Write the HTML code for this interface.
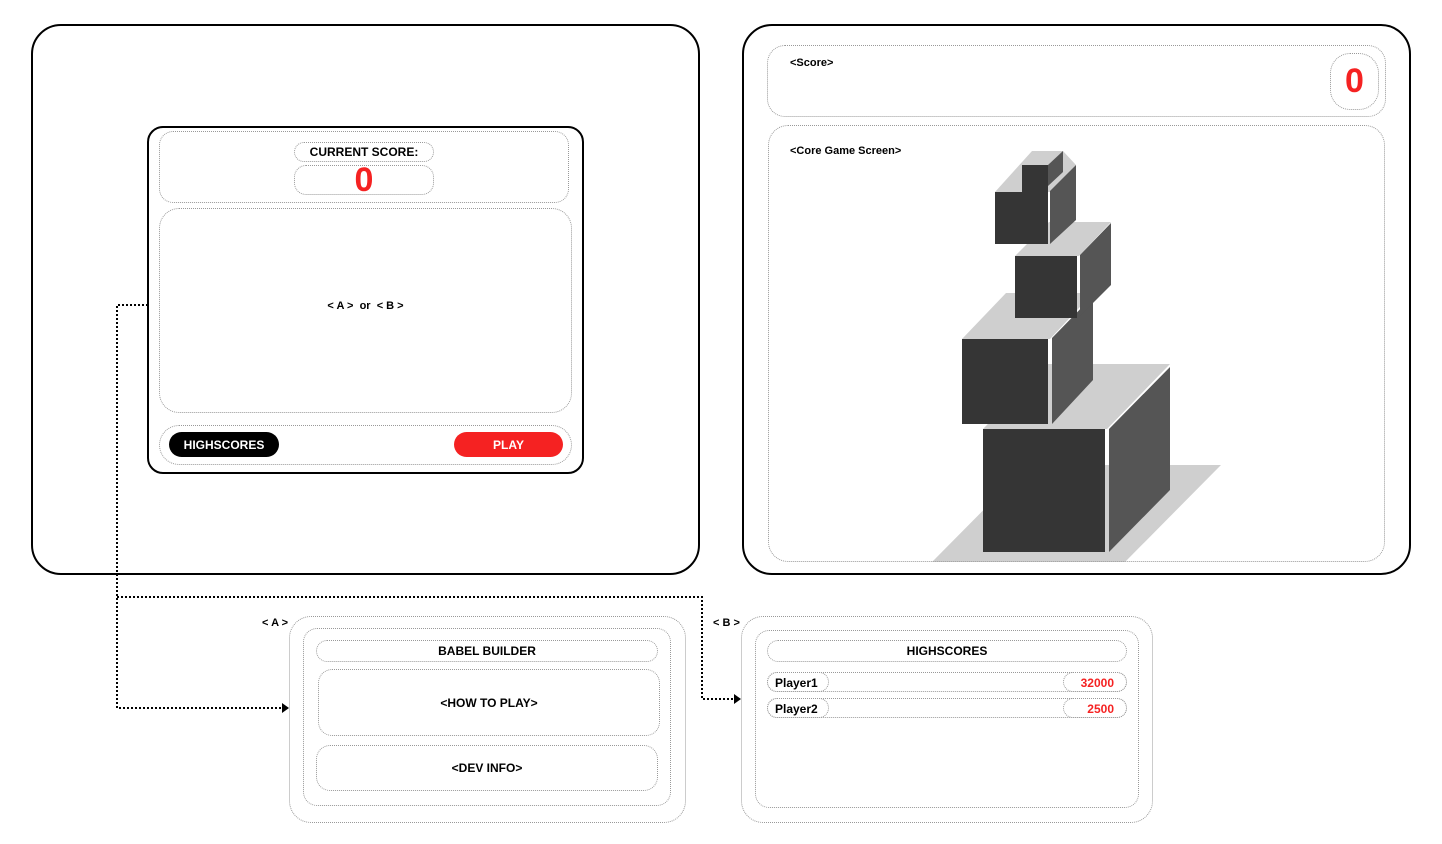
<!DOCTYPE html>
<html><head><style>
body{margin:0;width:1442px;height:844px;background:#fff;position:relative;overflow:hidden;font-family:"Liberation Sans",Arial,sans-serif;font-weight:bold;color:#000}
.a{position:absolute;box-sizing:border-box}
.d{border:1px dotted #999}
.c{display:flex;align-items:center;justify-content:center}
</style></head><body>
<svg class="a" style="left:0;top:0" width="1442" height="844">
<g fill="none" stroke="#000" stroke-width="2" stroke-dasharray="2,2">
<path d="M148 305H117V708H282"/>
<path d="M117 597H702V699H734"/>
</g>
<path d="M282 703L289 708L282 713Z M734 694L741 699L734 704Z"/>
<polygon points="932,562 1125,562 1221,465 1028,465" fill="#cfcfcf"/>
<polygon points="983,429 1107,429 1170,364 1046,364" fill="#cfcfcf"/>
<polygon points="1109,429 1170,367 1170,490 1109,552" fill="#555"/>
<rect x="983" y="429" width="122" height="123" fill="#353535"/>
<polygon points="962,339 1050,339 1093,293 1006,293" fill="#cfcfcf"/>
<polygon points="1052,338 1093,296 1093,380 1052,424" fill="#555"/>
<rect x="962" y="339" width="86" height="85" fill="#353535"/>
<polygon points="1015,256 1079,256 1111,222 1049,222" fill="#cfcfcf"/>
<polygon points="1080,255 1111,223 1111,285 1080,316" fill="#555"/>
<rect x="1015" y="256" width="62" height="62" fill="#353535"/>
<polygon points="995,192 1050,192 1076,165 1063,151 1032,151" fill="#cfcfcf"/>
<polygon points="1050,191 1076,165 1076,220 1050,244" fill="#555"/>
<polygon points="1048,165 1063,151 1063,172 1048,186" fill="#555"/>
<rect x="995" y="192" width="53" height="52" fill="#353535"/>
<rect x="1022" y="165" width="26" height="28" fill="#353535"/>
</svg>
<div class="a" style="left:31px;top:24px;width:669px;height:551px;border:2px solid #000;border-radius:30px"></div>
<div class="a" style="left:742px;top:24px;width:669px;height:551px;border:2px solid #000;border-radius:30px"></div>
<div class="a" style="left:147px;top:126px;width:437px;height:348px;border:2px solid #000;border-radius:16px"></div>
<div class="a d" style="left:159px;top:131px;width:410px;height:72px;border-radius:14px"></div>
<div class="a d c" style="left:294px;top:142px;width:140px;height:20px;border-radius:10px;font-size:12px">CURRENT SCORE:</div>
<div class="a d c" style="left:294px;top:165px;width:140px;height:30px;border-radius:12px;font-size:34px;color:#f52222">0</div>
<div class="a d c" style="left:159px;top:208px;width:413px;height:205px;border-radius:20px;font-size:11px;padding-bottom:10px">&lt; A &gt;&nbsp; or &nbsp;&lt; B &gt;</div>
<div class="a d" style="left:159px;top:425px;width:413px;height:40px;border-radius:20px"></div>
<div class="a c" style="left:169px;top:432px;width:110px;height:25px;border-radius:13px;background:#000;color:#fff;font-size:12px">HIGHSCORES</div>
<div class="a c" style="left:454px;top:432px;width:109px;height:25px;border-radius:13px;background:#f52222;color:#fff;font-size:12px">PLAY</div>
<div class="a d" style="left:767px;top:45px;width:619px;height:72px;border-radius:18px"></div>
<div class="a" style="left:790px;top:57px;font-size:11px">&lt;Score&gt;</div>
<div class="a d c" style="left:1330px;top:53px;width:49px;height:57px;border-radius:20px;font-size:34px;color:#f52222">0</div>
<div class="a d" style="left:768px;top:125px;width:617px;height:437px;border-radius:20px"></div>
<div class="a" style="left:790px;top:145px;font-size:11px">&lt;Core Game Screen&gt;</div>
<div class="a" style="left:262px;top:617px;font-size:11px">&lt; A &gt;</div>
<div class="a d" style="left:289px;top:616px;width:397px;height:207px;border-radius:22px"></div>
<div class="a d" style="left:303px;top:628px;width:368px;height:178px;border-radius:14px"></div>
<div class="a d c" style="left:316px;top:640px;width:342px;height:22px;border-radius:11px;font-size:12px">BABEL BUILDER</div>
<div class="a d c" style="left:318px;top:669px;width:342px;height:67px;border-radius:14px;font-size:12px">&lt;HOW TO PLAY&gt;</div>
<div class="a d c" style="left:316px;top:745px;width:342px;height:46px;border-radius:14px;font-size:12px">&lt;DEV INFO&gt;</div>
<div class="a" style="left:713px;top:617px;font-size:11px">&lt; B &gt;</div>
<div class="a d" style="left:741px;top:616px;width:412px;height:207px;border-radius:22px"></div>
<div class="a d" style="left:755px;top:630px;width:384px;height:178px;border-radius:14px"></div>
<div class="a d c" style="left:767px;top:640px;width:360px;height:22px;border-radius:11px;font-size:12px">HIGHSCORES</div>
<div class="a d" style="left:767px;top:672px;width:360px;height:20px;border-radius:10px"></div>
<div class="a d" style="left:767px;top:672px;width:62px;height:20px;border-radius:10px;font-size:12px;padding:3px 0 0 7px">Player1</div>
<div class="a d" style="left:1063px;top:672px;width:64px;height:20px;border-radius:10px;font-size:12px;color:#f52222;text-align:right;padding:3px 12px 0 0">32000</div>
<div class="a d" style="left:767px;top:698px;width:360px;height:20px;border-radius:10px"></div>
<div class="a d" style="left:767px;top:698px;width:62px;height:20px;border-radius:10px;font-size:12px;padding:3px 0 0 7px">Player2</div>
<div class="a d" style="left:1063px;top:698px;width:64px;height:20px;border-radius:10px;font-size:12px;color:#f52222;text-align:right;padding:3px 12px 0 0">2500</div>
</body></html>
